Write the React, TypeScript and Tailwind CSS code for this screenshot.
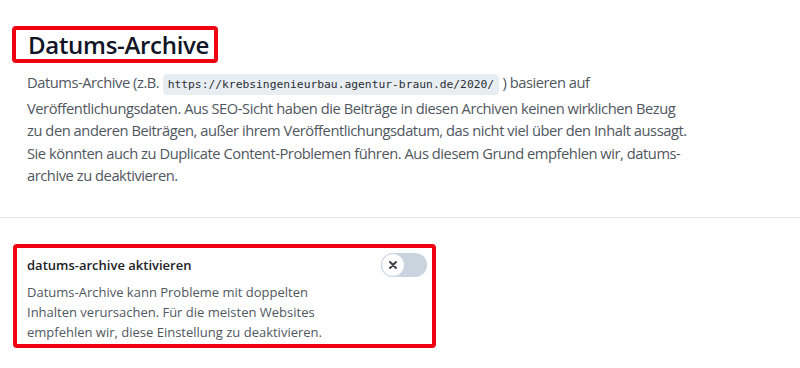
export default function App() {
  return (
    <div className="h-[368px] w-[800px] overflow-hidden bg-white font-['Open_Sans',sans-serif]">
      <section className="px-3 pt-[26px]">
        <div className="inline-flex h-[37px] items-center rounded-[4px] border-4 border-[#f00010] pl-[12px] pr-[5px]">
          <h2 className="text-[24px] font-semibold leading-none tracking-[-0.3px] text-[#101426]">
            Datums-Archive
          </h2>
        </div>
        <p className="mt-[8px] pl-[15px] text-[14.7px] leading-[22.5px] tracking-[-0.45px] text-[#50575e]">
          Datums-Archive (z.B.{" "}
          <code className="rounded-[4px] bg-[#e8edf2] px-[5px] py-[4px] font-['DejaVu_Sans_Mono',monospace] text-[11.3px] tracking-normal text-[#2a2f36]">
            https://krebsingenieurbau.agentur-braun.de/2020/
          </code>{" "}
          ) basieren auf
          <br />
          Veröffentlichungsdaten. Aus SEO-Sicht haben die Beiträge in diesen Archiven keinen wirklichen Bezug
          <br />
          zu den anderen Beiträgen, außer ihrem Veröffentlichungsdatum, das nicht viel über den Inhalt aussagt.
          <br />
          Sie könnten auch zu Duplicate Content-Problemen führen. Aus diesem Grund empfehlen wir, datums-
          <br />
          archive zu deaktivieren.
        </p>
      </section>

      <div className="mt-[30px] h-px bg-[#e6e7e8] shadow-[0_2px_3px_rgba(0,0,0,0.04)]" />

      <section className="px-[13px] pt-[26px]">
        <div className="flex w-[423px] items-start justify-between rounded-[4px] border-4 border-[#f00010] pb-[2px] pl-[10px] pr-[5px] pt-[3px]">
          <div>
            <h3 className="mt-[6px] text-[13px] font-semibold leading-[16px] text-[#1d2327]">
              datums-archive aktivieren
            </h3>
            <p className="mt-[9px] text-[13px] leading-[20px] text-[#50575e]">
              Datums-Archive kann Probleme mit doppelten
              <br />
              Inhalten verursachen. Für die meisten Websites
              <br />
              empfehlen wir, diese Einstellung zu deaktivieren.
            </p>
          </div>
          <button className="mt-[2px] flex h-[24px] w-[46px] items-center rounded-full bg-[#c9d4df] p-0">
            <span className="flex h-[24px] w-[24px] items-center justify-center rounded-full border border-[#c9d4df] bg-white">
              <svg width="10" height="10" viewBox="0 0 10 10" fill="none">
                <path d="M2 2l6 6M8 2l-6 6" stroke="#3c434a" strokeWidth="2" strokeLinecap="round" />
              </svg>
            </span>
          </button>
        </div>
      </section>
    </div>
  );
}
